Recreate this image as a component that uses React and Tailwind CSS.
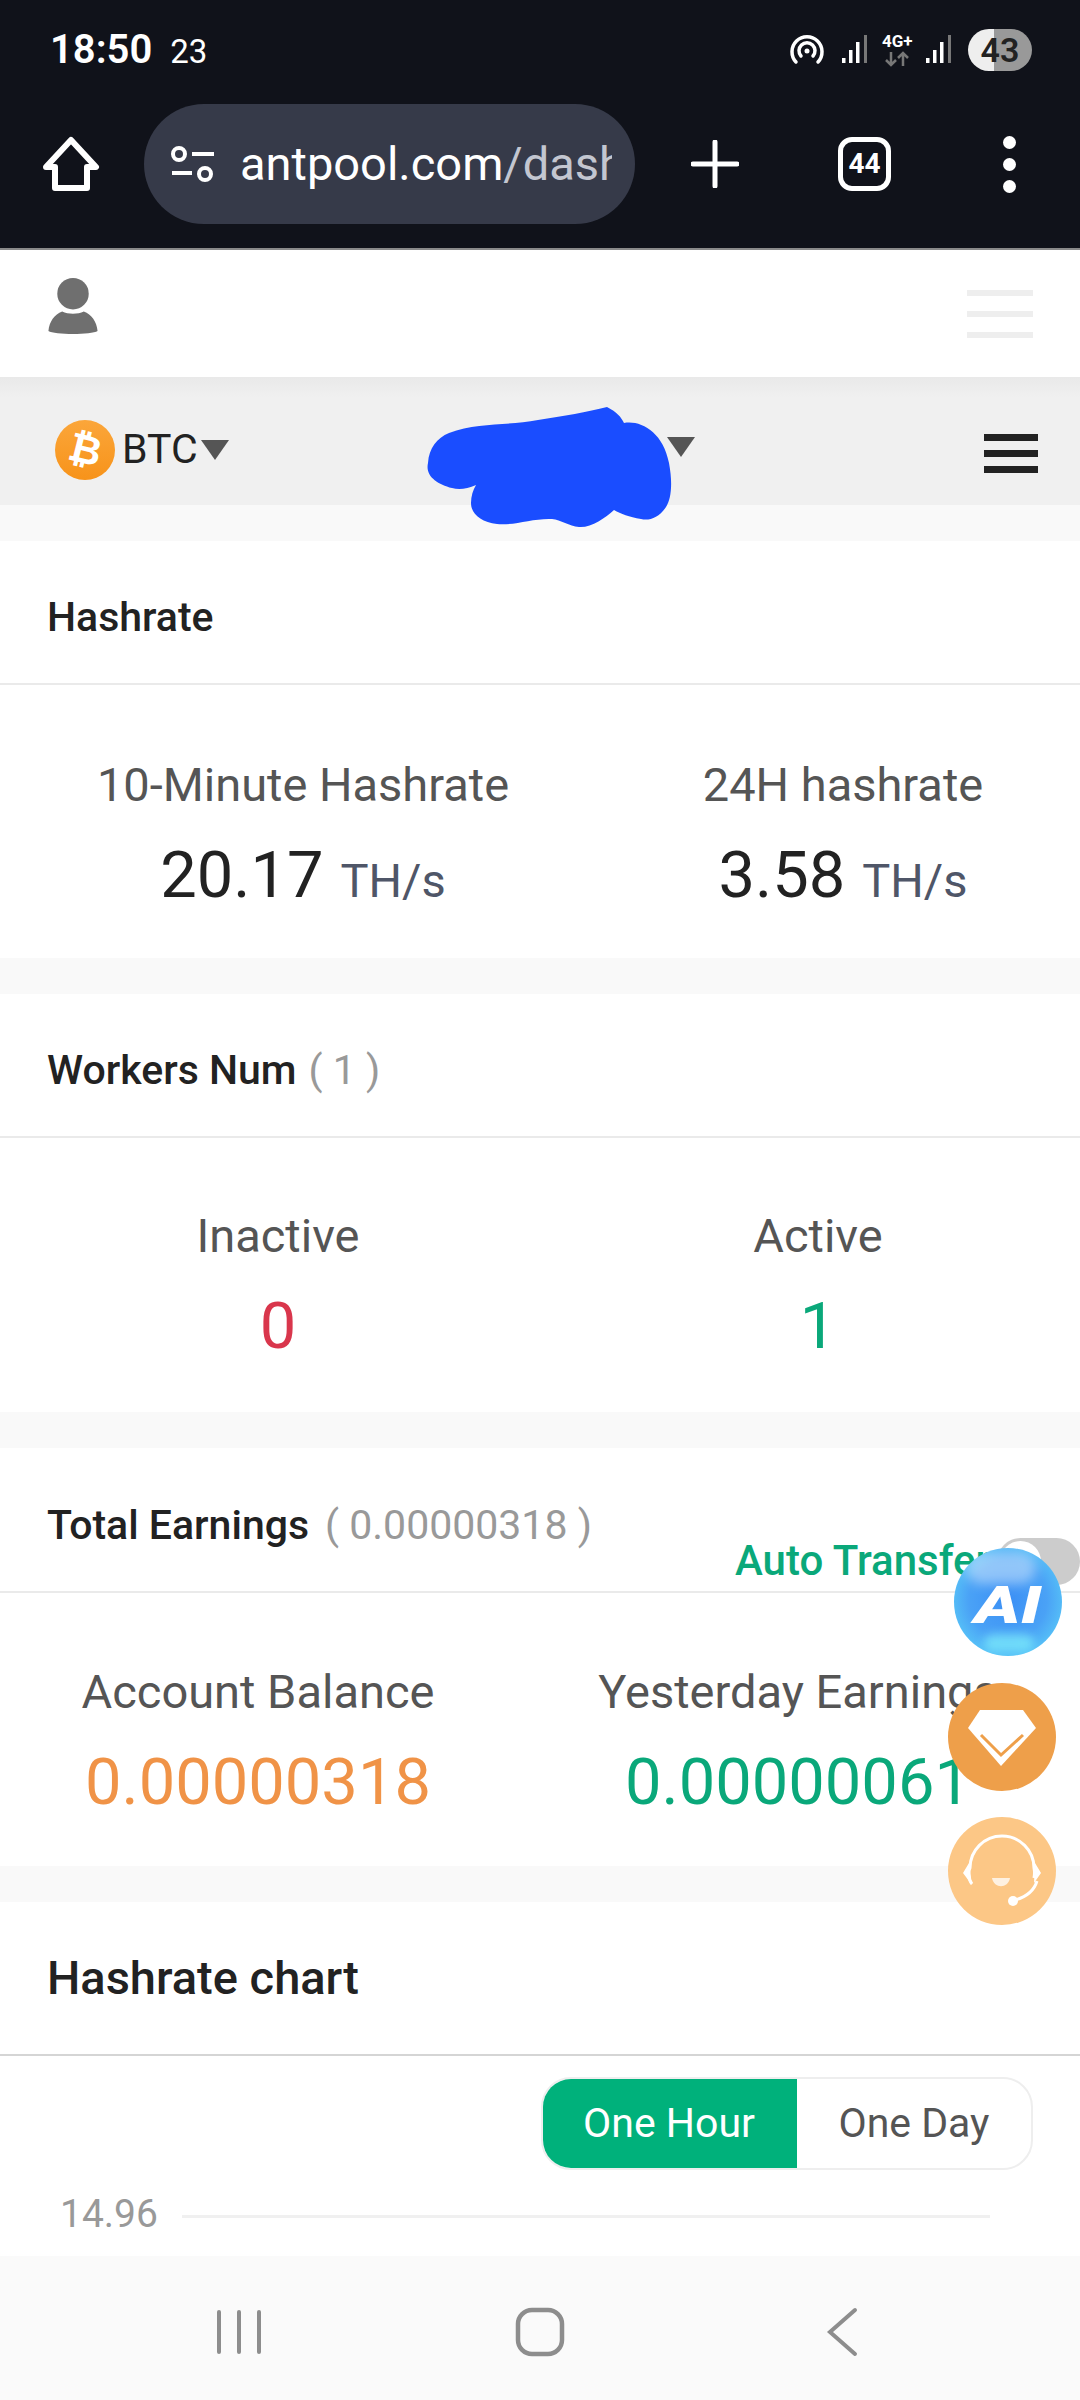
import React from 'react';

const Stat = ({ label, children }) => (
  <div className="flex flex-col items-center">
    <p className="text-[47px] leading-[54px] text-[#555]">{label}</p>
    <div className="mt-[27px] leading-[72px] whitespace-nowrap">{children}</div>
  </div>
);

const Rate = ({ value }) => (
  <>
    <span className="text-[65px] text-[#222]">{value}</span>
    <span className="ml-[17px] text-[47px] text-[#4f5668]">TH/s</span>
  </>
);

const Gap = () => <div className="h-[36px] bg-[#f9f9f9]" />;

const StatusIcons = () => (
  <svg width="174" height="40" viewBox="0 0 174 40" className="block">
    <g fill="none" stroke="#fff" strokeWidth="3.500" strokeLinecap="round">
      <path d="M6 32a15 15 0 1 1 22 0" />
      <path d="M11 26a8 8 0 1 1 12 0" />
    </g>
    <circle cx="17" cy="21" r="2.500" fill="#fff" />
    <g fill="#fff">
      <rect x="52" y="28" width="3.500" height="5" />
      <rect x="59" y="20" width="3.500" height="13" />
      <rect x="66" y="12" width="3.500" height="21" />
      <rect x="136" y="28" width="3.500" height="5" />
      <rect x="143" y="20" width="3.500" height="13" />
      <rect x="150" y="12" width="3.500" height="21" />
    </g>
    <rect x="74" y="5" width="3" height="28" fill="#777" />
    <rect x="158" y="5" width="3" height="28" fill="#777" />
    <g fill="none" stroke="#777" strokeWidth="2.500">
      <path d="M101 22v13M96 30l5 5 5-5" />
      <path d="M113 36V23M108 28l5-5 5 5" />
    </g>
  </svg>
);

const HomeIcon = () => (
  <svg width="58" height="56" viewBox="0 0 58 56" fill="none" stroke="#fff" strokeWidth="6" strokeLinejoin="round">
    <path d="M29 4L54 31H45V52H13V31H4Z" />
  </svg>
);

const ChartTabs = () => (
  <div className="flex h-[93px] w-[492px] overflow-hidden rounded-[30px] border-2 border-[#eee] text-[41px]">
    <div className="-my-[2px] -ml-[2px] flex w-[256px] items-center justify-center bg-[#00b17b] text-white">One Hour</div>
    <div className="flex flex-1 items-center justify-center text-[#555]">One Day</div>
  </div>
);

const AiBubble = () => (
  <div className="absolute left-[954px] top-[1548px] flex h-[108px] w-[108px] items-center justify-center overflow-hidden rounded-full bg-[radial-gradient(circle_at_50%_48%,#3b8ff5_0%,#4aa2f6_50%,#5fd8f8_92%)]">
    <div className="absolute left-[12px] top-[4px] h-[32px] w-[70px] rounded-full bg-white/40 blur-[6px]" />
    <div className="absolute bottom-[4px] left-[30px] h-[18px] w-[50px] rounded-full bg-[#7ff0fb]/70 blur-[5px]" />
    <span className="relative mt-[8px] scale-x-[1.35] text-[52px] font-black italic leading-none text-white">AI</span>
  </div>
);

const DiamondBubble = () => (
  <div className="absolute left-[948px] top-[1683px] flex h-[108px] w-[108px] items-center justify-center rounded-full bg-[#ee9f4a]">
    <svg width="68" height="58" viewBox="0 0 68 58">
      <path d="M12 2H55L68 20L33 58L0 20Z" fill="#fff" />
      <path d="M13 27L33 47L55 27" fill="none" stroke="#ee9f4a" strokeWidth="3" />
    </svg>
  </div>
);

const SupportBubble = () => (
  <div className="absolute left-[948px] top-[1817px] h-[108px] w-[108px] rounded-full bg-[#fcc786]">
    <svg width="108" height="108" viewBox="0 0 108 108" fill="none">
      <path d="M24 67C18 60 22 51 22 51a32 32 0 0 1 64 0c0 0 1 5 0 10" stroke="#fff" strokeWidth="3" />
      <path d="M21 46L15 56L24 68Z M87 46L93 56L86 66Z" fill="#fff" />
      <path d="M89 64C86 74 78 80 67 83" stroke="#fff" strokeWidth="3" />
      <circle cx="65" cy="84" r="5" fill="#fff" />
      <path d="M44 61h18c-2 11-16 11-18 0Z" fill="#fff" opacity="0.75" />
    </svg>
  </div>
);

const Scribble = () => (
  <svg width="260" height="130" viewBox="0 0 260 130" className="absolute left-[423px] top-[404px]">
    <path
      d="M26 29C55 18 85 22 115 16C140 12 165 8 184 3C194 8 198 13 201 19C218 16 240 28 246 59C250 80 248 95 243 103C236 114 226 117 218 115C206 113 198 110 191 106C182 114 168 124 156 123C146 122 138 116 129 115C110 114 90 122 74 120C58 118 48 110 48 99C48 92 50 86 53 81C44 85 36 86 29 84C14 80 2 72 5 59C6 44 14 34 26 29Z"
      fill="#1a4dff"
    />
  </svg>
);

export default function App() {
  return (
    <div className="relative flex h-[2400px] w-[1080px] flex-col overflow-hidden bg-white font-['Roboto',sans-serif]">
      {/* status bar + browser toolbar */}
      <div className="h-[248px] bg-[#10121a] text-white">
        <div className="flex h-[100px] items-center justify-between pl-[50px] pr-[48px]">
          <div className="flex items-baseline">
            <span className="text-[40px] font-semibold">18:50</span>
            <span className="ml-[18px] text-[33px]">23</span>
          </div>
          <div className="flex items-center gap-[4px]">
            <div className="relative">
              <StatusIcons />
              <span className="absolute left-[92px] top-[3px] text-[17px] font-bold leading-none">4G+</span>
            </div>
            <div className="flex h-[42px] w-[64px] items-center justify-center rounded-full bg-[linear-gradient(90deg,#eee_41%,#999_41%)] text-[34px] font-semibold text-[#222]">43</div>
          </div>
        </div>
        <div className="mt-[4px] flex h-[120px] items-center pl-[42px]">
          <HomeIcon />
          <div className="ml-[44px] flex h-[120px] w-[491px] items-center rounded-full bg-[#363a49] pl-[26px]">
            <svg width="46" height="38" viewBox="0 0 46 38" fill="none" stroke="#fff" strokeWidth="4">
              <circle cx="9" cy="9" r="6" />
              <path d="M22 9h22M2 28h20" />
              <circle cx="35" cy="29" r="6" />
            </svg>
            <div className="ml-[24px] w-[372px] overflow-hidden whitespace-nowrap text-[47px] text-white">
              antpool.com<span className="text-[#c3c6d0]">/dashboard</span>
            </div>
          </div>
          <svg width="48" height="48" viewBox="0 0 48 48" className="ml-[56px]" stroke="#fff" strokeWidth="5" strokeLinecap="round">
            <path d="M24 2v44M2 24h44" />
          </svg>
          <div className="ml-[99px] flex h-[54px] w-[53px] items-center justify-center rounded-[14px] border-[5px] border-white text-[28px] font-bold">44</div>
          <div className="ml-[112px] flex flex-col gap-[9px]">
            <div className="h-[13px] w-[13px] rounded-full bg-white" />
            <div className="h-[13px] w-[13px] rounded-full bg-white" />
            <div className="h-[13px] w-[13px] rounded-full bg-white" />
          </div>
        </div>
      </div>
      <div className="h-[2px] bg-[#8a8a8a]" />

      {/* site header */}
      <div className="flex h-[127px] items-start justify-between pl-[48px] pr-[47px] pt-[28px]">
        <svg width="50" height="57" viewBox="0 0 50 58" fill="#6f6f6f">
          <ellipse cx="25" cy="16" rx="16" ry="16" />
          <path d="M14 34c6 3 16 3 22 0c8 3 13 10 14 20c-6 4-44 4-50 0c1-10 6-17 14-20Z" />
        </svg>
        <div className="mt-[12px] flex flex-col gap-[15px]">
          <div className="h-[6px] w-[66px] bg-[#eee]" />
          <div className="h-[6px] w-[66px] bg-[#eee]" />
          <div className="h-[6px] w-[66px] bg-[#eee]" />
        </div>
      </div>

      {/* coin bar */}
      <div className="flex h-[128px] items-center bg-[#f0f0f0] bg-[linear-gradient(180deg,#e9e9e9_0%,#f0f0f0_16%)] pl-[55px] pr-[42px] pt-[18px]">
        <div className="flex h-[60px] w-[60px] items-center justify-center rounded-full bg-[linear-gradient(180deg,#fba63a,#f7931a)] text-[40px] font-bold text-white">
          <span className="rotate-[14deg]">₿</span>
        </div>
        <span className="ml-[7px] text-[41px] text-[#222]">BTC</span>
        <div className="ml-[3px] h-0 w-0 border-x-[14px] border-t-[20px] border-x-transparent border-t-[#555]" />
        <div className="mb-[6px] ml-[438px] h-0 w-0 border-x-[14px] border-t-[20px] border-x-transparent border-t-[#555]" />
        <div className="ml-auto mt-[6px] flex flex-col gap-[9px]">
          <div className="h-[7px] w-[54px] bg-[#222]" />
          <div className="h-[7px] w-[54px] bg-[#222]" />
          <div className="h-[7px] w-[54px] bg-[#222]" />
        </div>
      </div>
      <Gap />

      {/* hashrate */}
      <div className="flex h-[144px] items-center border-b-2 border-[#eaeaea] pl-[47px] pt-[12px] text-[41px] font-medium text-[#222]">Hashrate</div>
      <div className="grid h-[273px] grid-cols-[606px_1fr] pt-[73px]">
        <Stat label="10-Minute Hashrate"><Rate value="20.17" /></Stat>
        <Stat label="24H hashrate"><Rate value="3.58" /></Stat>
      </div>
      <Gap />

      {/* workers */}
      <div className="flex h-[144px] items-center border-b-2 border-[#eaeaea] pl-[47px] pt-[12px] text-[41px] text-[#222]">
        <span className="font-medium">Workers Num</span>
        <span className="ml-[12px] text-[#999]">( 1 )</span>
      </div>
      <div className="grid h-[274px] grid-cols-[556px_1fr] pt-[71px]">
        <Stat label="Inactive"><span className="text-[65px] text-[#d9364c]">0</span></Stat>
        <Stat label="Active"><span className="text-[65px] text-[#0aa87a]">1</span></Stat>
      </div>
      <Gap />

      {/* earnings */}
      <div className="h-[145px] border-b-2 border-[#eaeaea] pl-[47px] pt-[47px] text-[41px] text-[#222]">
        <span className="font-medium">Total Earnings</span>
        <span className="ml-[16px] text-[#999]">( 0.00000318 )</span>
      </div>
      <div className="grid h-[273px] grid-cols-[516px_1fr] pt-[72px]">
        <Stat label="Account Balance"><span className="text-[65px] text-[#f09347]">0.00000318</span></Stat>
        <Stat label="Yesterday Earnings"><span className="text-[65px] text-[#0aa87a]">0.00000061</span></Stat>
      </div>
      <Gap />

      {/* chart */}
      <div className="flex h-[154px] items-center border-b-2 border-[#d5d5d5] pl-[47px] text-[47px] font-medium text-[#222]">Hashrate chart</div>
      <div className="flex-1">
        <div className="flex justify-end pr-[47px] pt-[21px]">
          <ChartTabs />
        </div>
        <div className="mt-[15px] flex items-center pl-[60px] pr-[90px]">
          <span className="text-[39px] text-[#999]">14.96</span>
          <div className="ml-[24px] mt-[5px] h-[3px] flex-1 bg-[#f0f0f0]" />
        </div>
      </div>

      {/* android nav */}
      <div className="flex h-[144px] items-center bg-[#fafafa] pl-[216px] pt-[8px]">
        <svg width="46" height="46" viewBox="0 0 46 46" stroke="#8d8d8d" strokeWidth="4" strokeLinecap="round">
          <path d="M3 3v40M23 3v40M43 3v40" />
        </svg>
        <svg width="50" height="50" viewBox="0 0 50 50" fill="none" stroke="#8d8d8d" strokeWidth="4.500" className="ml-[253px]">
          <rect x="3" y="3" width="44" height="44" rx="14" />
        </svg>
        <svg width="32" height="50" viewBox="0 0 32 50" fill="none" stroke="#8d8d8d" strokeWidth="4" strokeLinecap="round" className="ml-[261px]">
          <path d="M29 3L4 25L29 47" />
        </svg>
      </div>

      {/* overlays */}
      <Scribble />
      <div className="absolute left-[735px] top-[1533px] text-[42px] font-medium leading-[56px] text-[#0aa87a]">Auto Transfer</div>
      <div className="absolute left-[997px] top-[1538px] h-[47px] w-[83px] rounded-full bg-[#ccc]">
        <div className="ml-[3px] mt-[3px] h-[41px] w-[41px] rounded-full bg-white" />
      </div>
      <AiBubble />
      <DiamondBubble />
      <SupportBubble />
    </div>
  );
}
